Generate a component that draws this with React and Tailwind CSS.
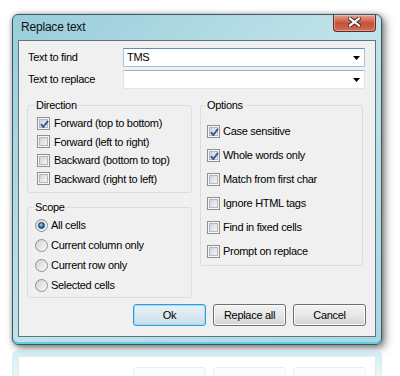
import React from "react";

function Check({ checked }) {
  return (
    <span className="relative flex h-[13px] w-[13px] shrink-0 items-center justify-center border border-[#8e8f8f] bg-[#f6f6f6]">
      <span className="h-[9px] w-[9px] border border-[#b4b8be] bg-gradient-to-br from-[#cdd0d5] to-[#f7f7f7]" />
      {checked && (
        <svg className="absolute left-[1px] top-[1px]" width="11" height="11" viewBox="0 0 11 11">
          <path d="M2 5.2 L4.3 8 L9 1.8" stroke="#3d5aa3" strokeWidth="2" fill="none" strokeLinejoin="round" />
        </svg>
      )}
    </span>
  );
}

function Radio({ checked }) {
  return (
    <span className="flex h-[13px] w-[13px] shrink-0 items-center justify-center rounded-full border border-[#8e8f8f] bg-gradient-to-br from-[#cfd1d4] to-[#fbfbfb]">
      {checked && (
        <span className="h-[7px] w-[7px] rounded-full border border-[#0d3a6e] bg-[radial-gradient(circle_at_40%_35%,#9fe0ff_0%,#2b7fc4_45%,#0f3f78_100%)]" />
      )}
    </span>
  );
}

function Arrow() {
  return (
    <svg width="7" height="4" viewBox="0 0 7 4" className="mr-[4px] shrink-0">
      <path d="M0 0 H7 L3.5 4 Z" fill="#000" />
    </svg>
  );
}

function Button({ children, def }) {
  return (
    <div
      className={
        def
          ? "flex h-[22px] w-[73px] items-center justify-center rounded-[3px] border border-[#3399dd] bg-gradient-to-b from-[#e8f2f7] via-[#dbe9f0] to-[#c6dce7] shadow-[inset_0_0_0_1px_#9fdcf6]"
          : "flex h-[22px] w-[73px] items-center justify-center rounded-[3px] border border-[#707070] bg-gradient-to-b from-[#f3f3f3] via-[#e8e8e8] to-[#d2d2d2] shadow-[inset_0_0_0_1px_#fbfbfb]"
      }
    >
      {children}
    </div>
  );
}

const dirItems = [
  ["Forward (top to bottom)", true],
  ["Forward (left to right)", false],
  ["Backward (bottom to top)", false],
  ["Backward (right to left)", false],
];
const scopeItems = [
  ["All cells", true],
  ["Current column only", false],
  ["Current row only", false],
  ["Selected cells", false],
];
const optItems = [
  ["Case sensitive", true],
  ["Whole words only", true],
  ["Match from first char", false],
  ["Ignore HTML tags", false],
  ["Find in fixed cells", false],
  ["Prompt on replace", false],
];

export default function App() {
  return (
    <div className="h-[376px] w-[400px] overflow-hidden bg-white font-['Liberation_Sans',Arial,sans-serif] text-[11px] tracking-[-0.3px] text-black">
      {/* window */}
      <div className="ml-[12px] mt-[14px] flex h-[331px] w-[370px] flex-col rounded-[6px] border border-[#3c5863] bg-gradient-to-br from-[#98cdd9] via-[#c1e3ea] to-[#a9d7e1] shadow-[inset_0_-2px_0_#62cde2,3px_3px_9px_rgba(0,0,0,0.5),0_0_4px_rgba(0,0,0,0.25)]">
        <div className="flex h-[25px] shrink-0 items-start justify-between pl-[8px] pr-[5px]">
          <span className="mt-[5px] text-[12px] leading-[15px] tracking-[-0.2px] text-[#111]">Replace text</span>
          <div className="flex h-[17px] w-[43px] items-center justify-center rounded-b-[4px] border border-t-0 border-[#5b2b24] bg-gradient-to-b from-[#e6a394] via-[#c5503c] to-[#d56c55] shadow-[inset_0_0_0_1px_rgba(255,220,210,0.45)]">
            <svg width="13" height="10" viewBox="0 0 13 10" className="-mt-[2px]">
              <path d="M2 1.5 L11 8.5 M11 1.5 L2 8.5" stroke="#3a2a28" strokeWidth="4" strokeLinecap="square" />
              <path d="M2 1.5 L11 8.5 M11 1.5 L2 8.5" stroke="#ffffff" strokeWidth="2.2" strokeLinecap="square" />
            </svg>
          </div>
        </div>
        <div className="mx-[5px] flex h-[297px] flex-col border border-[#5d7681] bg-[#f0f0f0] pt-[7px]">
          {/* rows */}
          <div className="flex h-[19px] items-center">
            <span className="w-[104px] pl-[9px]">Text to find</span>
            <div className="flex h-[19px] w-[242px] items-center border border-[#a7c4dd] border-t-[#5f8fb7] bg-white pl-[3px]">
              <span className="flex-1">TMS</span>
              <Arrow />
            </div>
          </div>
          <div className="mt-[3px] flex h-[19px] items-center">
            <span className="w-[104px] pl-[9px]">Text to replace</span>
            <div className="flex h-[19px] w-[242px] items-center border border-[#e1e5ea] border-t-[#abadb3] bg-white pl-[3px]">
              <span className="flex-1"></span>
              <Arrow />
            </div>
          </div>
          {/* groups */}
          <div className="mt-[10px] flex gap-[8px] pl-[8px]">
            <div className="flex w-[165px] flex-col">
              <fieldset className="rounded-[3px] border border-[#d5dfe5] px-[9px] pb-[4px] pt-[2px]">
                <legend className="ml-[-2px] px-[1px] leading-[13px]">Direction</legend>
                {dirItems.map(([t, c]) => (
                  <div key={t} className="flex h-[18.5px] items-center gap-[4px]">
                    <Check checked={c} />
                    <span>{t}</span>
                  </div>
                ))}
              </fieldset>
              <fieldset className="mt-[8px] rounded-[3px] border border-[#d5dfe5] pb-[2px] pl-[7px] pt-[1px]">
                <legend className="ml-[-1px] px-[1px] leading-[13px]">Scope</legend>
                {scopeItems.map(([t, c]) => (
                  <div key={t} className="flex h-[20px] items-center gap-[3px]">
                    <Radio checked={c} />
                    <span>{t}</span>
                  </div>
                ))}
              </fieldset>
            </div>
            <fieldset className="h-fit w-[163px] rounded-[3px] border border-[#d5dfe5] pb-[2px] pl-[6px] pt-[7px]">
              <legend className="ml-[-1px] px-[1px] leading-[13px]">Options</legend>
              {optItems.map(([t, c]) => (
                <div key={t} className="flex h-[24px] items-center gap-[3px]">
                  <Check checked={c} />
                  <span>{t}</span>
                </div>
              ))}
            </fieldset>
          </div>
          {/* buttons */}
          <div className="mt-[6px] flex justify-end gap-[7px] pr-[9px]">
            <Button def>Ok</Button>
            <Button>Replace all</Button>
            <Button>Cancel</Button>
          </div>
        </div>
      </div>
      {/* reflection */}
      <div className="ml-[12px] mt-[5px] h-[40px] w-[370px] rounded-t-[6px] border-x border-t border-[#c9e7ee] bg-gradient-to-b from-[#bfe7f0] to-[#f4fbfd] px-[5px] pt-[5px] opacity-70">
        <div className="flex h-full justify-end gap-[7px] border-x border-t border-[#dbe2e6] bg-white pr-[9px] pt-[10px]">
          <div className="h-[22px] w-[73px] rounded-[3px] border border-[#d3eefa] bg-[#f7fbfd]" />
          <div className="h-[22px] w-[73px] rounded-[3px] border border-[#e8e8e8] bg-[#fbfbfb]" />
          <div className="h-[22px] w-[73px] rounded-[3px] border border-[#e8e8e8] bg-[#fbfbfb]" />
        </div>
      </div>
    </div>
  );
}
